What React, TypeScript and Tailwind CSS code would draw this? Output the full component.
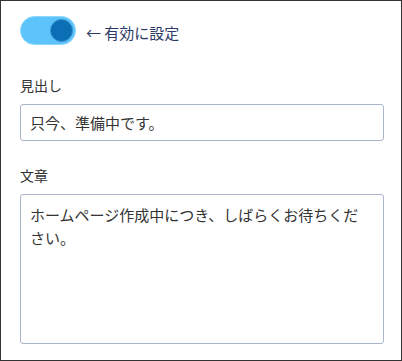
import React, { useState } from 'react';

const App = () => {
  const [enabled, setEnabled] = useState(true);

  return (
    <div
      className="w-[402px] h-[361px] border border-[#333333] bg-white px-[19px] pt-[15px] text-[#333333]"
      style={{ fontFamily: '"Noto Sans CJK JP", "Noto Sans", sans-serif' }}
    >
      {/* Toggle */}
      <div className="flex items-center h-[29px]">
        <button
          type="button"
          onClick={() => setEnabled(!enabled)}
          className={`relative w-[56px] h-[29px] rounded-full border ${
            enabled ? 'bg-[#5cc4fa] border-[#8ed6fc] justify-end' : 'bg-[#d0d7e2] border-[#c0c8d4] justify-start'
          } flex items-center px-[2px]`}
        >
          <span className="block w-[23px] h-[23px] rounded-full bg-[#0b6fb6] border border-[#3a8fcf]"></span>
        </button>
        <span className="ml-[10px] mt-[3px] text-[15px] leading-none text-[#2c3a66]">← 有効に設定</span>
      </div>

      {/* Heading */}
      <label className="block mt-[30px] text-[14px] leading-[20px]">見出し</label>
      <input
        type="text"
        defaultValue="只今、準備中です。"
        className="block mt-[9px] w-[364px] h-[37px] rounded-[3px] border border-[#aab4ca] px-[9px] text-[15px] text-[#333333] outline-none"
      />

      {/* Body */}
      <label className="block mt-[24px] text-[14px] leading-[20px]">文章</label>
      <textarea
        defaultValue="ホームページ作成中につき、しばらくお待ちください。"
        className="block mt-[9px] w-[364px] h-[150px] resize-none rounded-[3px] border border-[#aab4ca] pl-[9px] pr-[12px] pt-[8px] text-[15px] leading-[23px] text-[#333333] outline-none"
      />
    </div>
  );
};

export default App;
